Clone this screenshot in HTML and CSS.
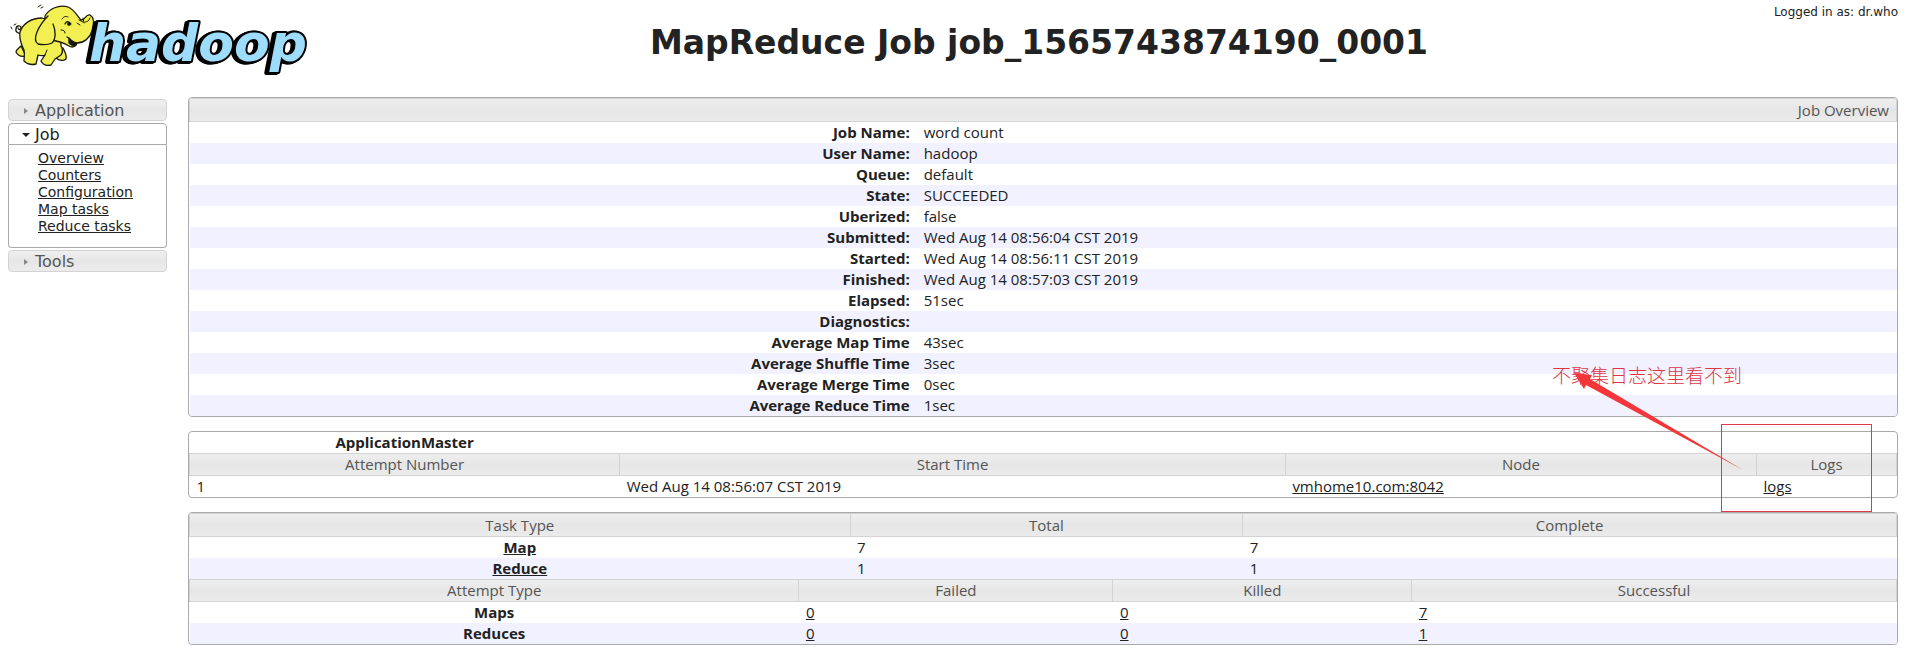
FILE: index.html
```html
<!DOCTYPE html>
<html lang="en">
<head>
    <meta charset="UTF-8">
    <meta name="viewport" content="width=device-width, initial-scale=1.0">
    <title>MapReduce Job job_1565743874190_0001</title>
    <link rel="stylesheet" href="styles.css">
</head>
<body>
    <header class="header">
        <a class="logo" href="#">
            <svg width="310" height="78" viewBox="0 0 310 78" role="img" aria-label="hadoop">
                <!-- elephant -->
                <g fill="#f1ef52" stroke="#1b1a08" stroke-width="1.3" stroke-linejoin="round" stroke-linecap="round">
                    <path d="M22 33c-3 1-7-1-6-4 0-4 5-4 5-1 0 2-3 2-3 0" fill="none"/>
                    <path d="M21 46c-2 2-5 4-5 6 2 4 6 5 10 4z"/>
                    <path d="M57 48l-1 10c3 3 8 3 10 1 1-4-1-7-3-11z"/>
                    <path d="M42 18c-10 0-19 5-22 14-1 6 1 12 4 18 1 4 0 8 0 11 3 3 8 4 12 3l2-9c3 1 5 1 7 0l-4 6c2 4 6 5 10 4l4-6 6-4c2-3 2-6 0-9L60 24z"/>
                    <path d="M45 16c4-7 14-12 23-9 7 3 9 9 13 13 5 0 4-6 9-5 4 2 4 9 2 16s-8 12-15 12c-1 4-5 5-8 3-3-2-5-3-9-4-6-1-12-3-16-8z"/>
                    <path d="M48 16c-6 6-9 11-11 16-2 5-2 10 1 12 5 1 10 1 14-1 4-4 4-12 1-19"/>
                    <path d="M69 38c2 3 5 4 8 5-2 4-6 3-8 0z" fill="#1b1a08"/>
                    <path d="M67 37l3 2" fill="none"/>
                    <path d="M65 24c1-3 4-3 6 0" fill="none"/>
                    <circle cx="69" cy="24" r="1.2" fill="#1b1a08"/>
                    <path d="M62 19c2-3 4-3 6-2M79 20l4 2M77 23l3 2M83 18l1 5M61 30c3 0 4 1 4 3M90 18c-1 3-3 4-5 4M45 55l2-5" fill="none" stroke-width="1"/>
                    <path d="M12 29l-1-2M14 25l2-1M38 7l3-2M41 8l2-1" fill="none" stroke-width="1"/>
                </g>
                <text class="logo_word" x="89" y="61">hadoop</text>
            </svg>
        </a>
        <h1 class="title">MapReduce Job job_1565743874190_0001</h1>
        <div class="user">Logged in as: dr.who</div>
    </header>

    <div class="page">
        <nav class="nav">
            <h3><a href="#">Application</a></h3>
            <h3 class="active"><a href="#">Job</a></h3>
            <ul>
                <li><a href="#">Overview</a></li>
                <li><a href="#">Counters</a></li>
                <li><a href="#">Configuration</a></li>
                <li><a href="#">Map tasks</a></li>
                <li><a href="#">Reduce tasks</a></li>
            </ul>
            <h3><a href="#">Tools</a></h3>
        </nav>

        <main class="content">
            <div class="box">
                <table class="info">
                    <colgroup><col class="c_label"><col></colgroup>
                    <thead>
                        <tr class="bar"><th colspan="2">Job Overview</th></tr>
                    </thead>
                    <tbody>
                        <tr><th>Job Name:</th><td>word count</td></tr>
                        <tr class="even"><th>User Name:</th><td>hadoop</td></tr>
                        <tr><th>Queue:</th><td>default</td></tr>
                        <tr class="even"><th>State:</th><td>SUCCEEDED</td></tr>
                        <tr><th>Uberized:</th><td>false</td></tr>
                        <tr class="even"><th>Submitted:</th><td>Wed Aug 14 08:56:04 CST 2019</td></tr>
                        <tr><th>Started:</th><td>Wed Aug 14 08:56:11 CST 2019</td></tr>
                        <tr class="even"><th>Finished:</th><td>Wed Aug 14 08:57:03 CST 2019</td></tr>
                        <tr><th>Elapsed:</th><td>51sec</td></tr>
                        <tr class="even"><th>Diagnostics:</th><td></td></tr>
                        <tr><th>Average Map Time</th><td>43sec</td></tr>
                        <tr class="even"><th>Average Shuffle Time</th><td>3sec</td></tr>
                        <tr><th>Average Merge Time</th><td>0sec</td></tr>
                        <tr class="even"><th>Average Reduce Time</th><td>1sec</td></tr>
                    </tbody>
                </table>
            </div>

            <div class="box">
                <table class="master">
                    <colgroup><col class="c_number"><col class="c_start"><col class="c_node"><col></colgroup>
                    <tr><th>ApplicationMaster</th><td colspan="3"></td></tr>
                    <tr class="bar"><th>Attempt Number</th><th>Start Time</th><th>Node</th><th>Logs</th></tr>
                    <tr>
                        <td>1</td>
                        <td>Wed Aug 14 08:56:07 CST 2019</td>
                        <td><a href="#">vmhome10.com:8042</a></td>
                        <td><a href="#">logs</a></td>
                    </tr>
                </table>
            </div>

            <div class="box">
                <table class="tasks">
                    <colgroup><col class="c_task"><col class="c_total"><col></colgroup>
                    <tr class="bar"><th>Task Type</th><th>Total</th><th>Complete</th></tr>
                    <tr><th><a href="#">Map</a></th><td>7</td><td>7</td></tr>
                    <tr class="even"><th><a href="#">Reduce</a></th><td>1</td><td>1</td></tr>
                </table>
                <table class="attempts">
                    <colgroup><col class="c_attempt"><col class="c_failed"><col class="c_killed"><col></colgroup>
                    <tr class="bar"><th>Attempt Type</th><th>Failed</th><th>Killed</th><th>Successful</th></tr>
                    <tr>
                        <th>Maps</th>
                        <td><a href="#">0</a></td>
                        <td><a href="#">0</a></td>
                        <td><a href="#">7</a></td>
                    </tr>
                    <tr class="even">
                        <th>Reduces</th>
                        <td><a href="#">0</a></td>
                        <td><a href="#">0</a></td>
                        <td><a href="#">1</a></td>
                    </tr>
                </table>
            </div>

            <!-- red note over the logs column -->
            <div class="note">
                <p lang="zh-CN">不聚集日志这里看不到</p>
                <svg width="170" height="98" viewBox="0 0 170 98" aria-hidden="true">
                    <path d="M0 0l18 2-2 4 153 91L12 12l-2 4z" fill="#f4363a"/>
                </svg>
                <div class="frame"></div>
            </div>
        </main>
    </div>
</body>
</html>
```
FILE: styles.css
```css
body,h1,h3,ul,li,p { margin: 0; padding: 0; }
ul,li { list-style: none; }
body { background: #fff; color: #222; font-family: "DejaVu Sans", Verdana, sans-serif; }
a { color: #222; }

.header { display: grid; grid-template-columns: 310px 1fr 130px; padding: 0 8px 0 0; height: 97px; }
.logo { display: block; }
.logo svg { display: block; }
.logo_word {
    font: italic bold 52px "DejaVu Sans", sans-serif;
    fill: #9edcfb; stroke: #000; stroke-width: 4px; stroke-linejoin: round; paint-order: stroke;
    filter: drop-shadow(-2px 1px 0 #000) drop-shadow(-1px 0 0 #000);
}
.title { margin-top: 24px; font-size: 33px; line-height: 38px; text-align: center; white-space: nowrap; }
.user { margin-top: 4px; font-size: 12px; line-height: 16px; text-align: right; }

.page { display: flex; align-items: flex-start; gap: 21px; padding: 0 8px; }

/* accordion */
.nav { flex: 0 0 159px; padding-top: 2px; }
.nav h3 { box-sizing: border-box; height: 22px; margin-bottom: 2px; border: 1px solid #d3d3d3; border-radius: 4px; background: linear-gradient(#efefef, #e6e6e6 50%, #ececec); font-size: 16px; font-weight: normal; line-height: 22px; }
.nav h3 a { display: flex; align-items: center; color: #555; text-decoration: none; }
.nav h3 a::before { content: ""; margin: 0 7px 0 15px; border: 3px solid transparent; border-left: 4px solid #888; border-right: 0; }
.nav .active { margin-bottom: 0; border-color: #aaa; border-radius: 4px 4px 0 0; background: #fff; }
.nav .active a { color: #222; }
.nav .active a::before { margin: 0 5px 0 13px; border: 4px solid transparent; border-top-color: #222; border-bottom: 0; }
.nav ul { margin-bottom: 2px; padding: 5px 0 12px 29px; border: 1px solid #aaa; border-top: 0; border-radius: 0 0 4px 4px; }
.nav li { font-size: 14px; line-height: 17px; }

/* tables */
.content { flex: 1; position: relative; font-family: "Open Sans", "Noto Sans", sans-serif; font-size: 15px; }
.box { margin-bottom: 14px; border: 1px solid #aaa; border-radius: 4px; overflow: hidden; }
table { width: 100%; table-layout: fixed; border-collapse: collapse; }
th,td { height: 21px; padding: 0 7px; line-height: 21px; }
td { text-align: left; }
.even { background: #f1f1ff; }
.bar { background: linear-gradient(#eee, #e6e6e6 50%, #ececec); }
.bar th { height: 21px; border: 1px solid #d3d3d3; color: #555; font-weight: normal; }
.info th { text-align: right; }
.info .bar th,.tasks .bar th { height: 22px; }
.c_label { width: 42.6%; }
.c_number { width: 25.2%; }
.c_start { width: 39%; }
.c_node { width: 27.6%; }
.c_task { width: 38.7%; }
.c_total { width: 23%; }
.c_attempt { width: 35.7%; }
.c_failed { width: 18.4%; }
.c_killed { width: 17.5%; }

/* note */
.note p { position: absolute; top: 266px; right: 156px; color: #dc3545; font: 19px/24px "Noto Sans CJK SC", sans-serif; font-weight: 300; }
.note svg { position: absolute; top: 276px; right: 154px; }
.frame { position: absolute; top: 327px; right: 26px; box-sizing: border-box; width: 151px; height: 88px; border: 1px solid #e0384a; }
```
